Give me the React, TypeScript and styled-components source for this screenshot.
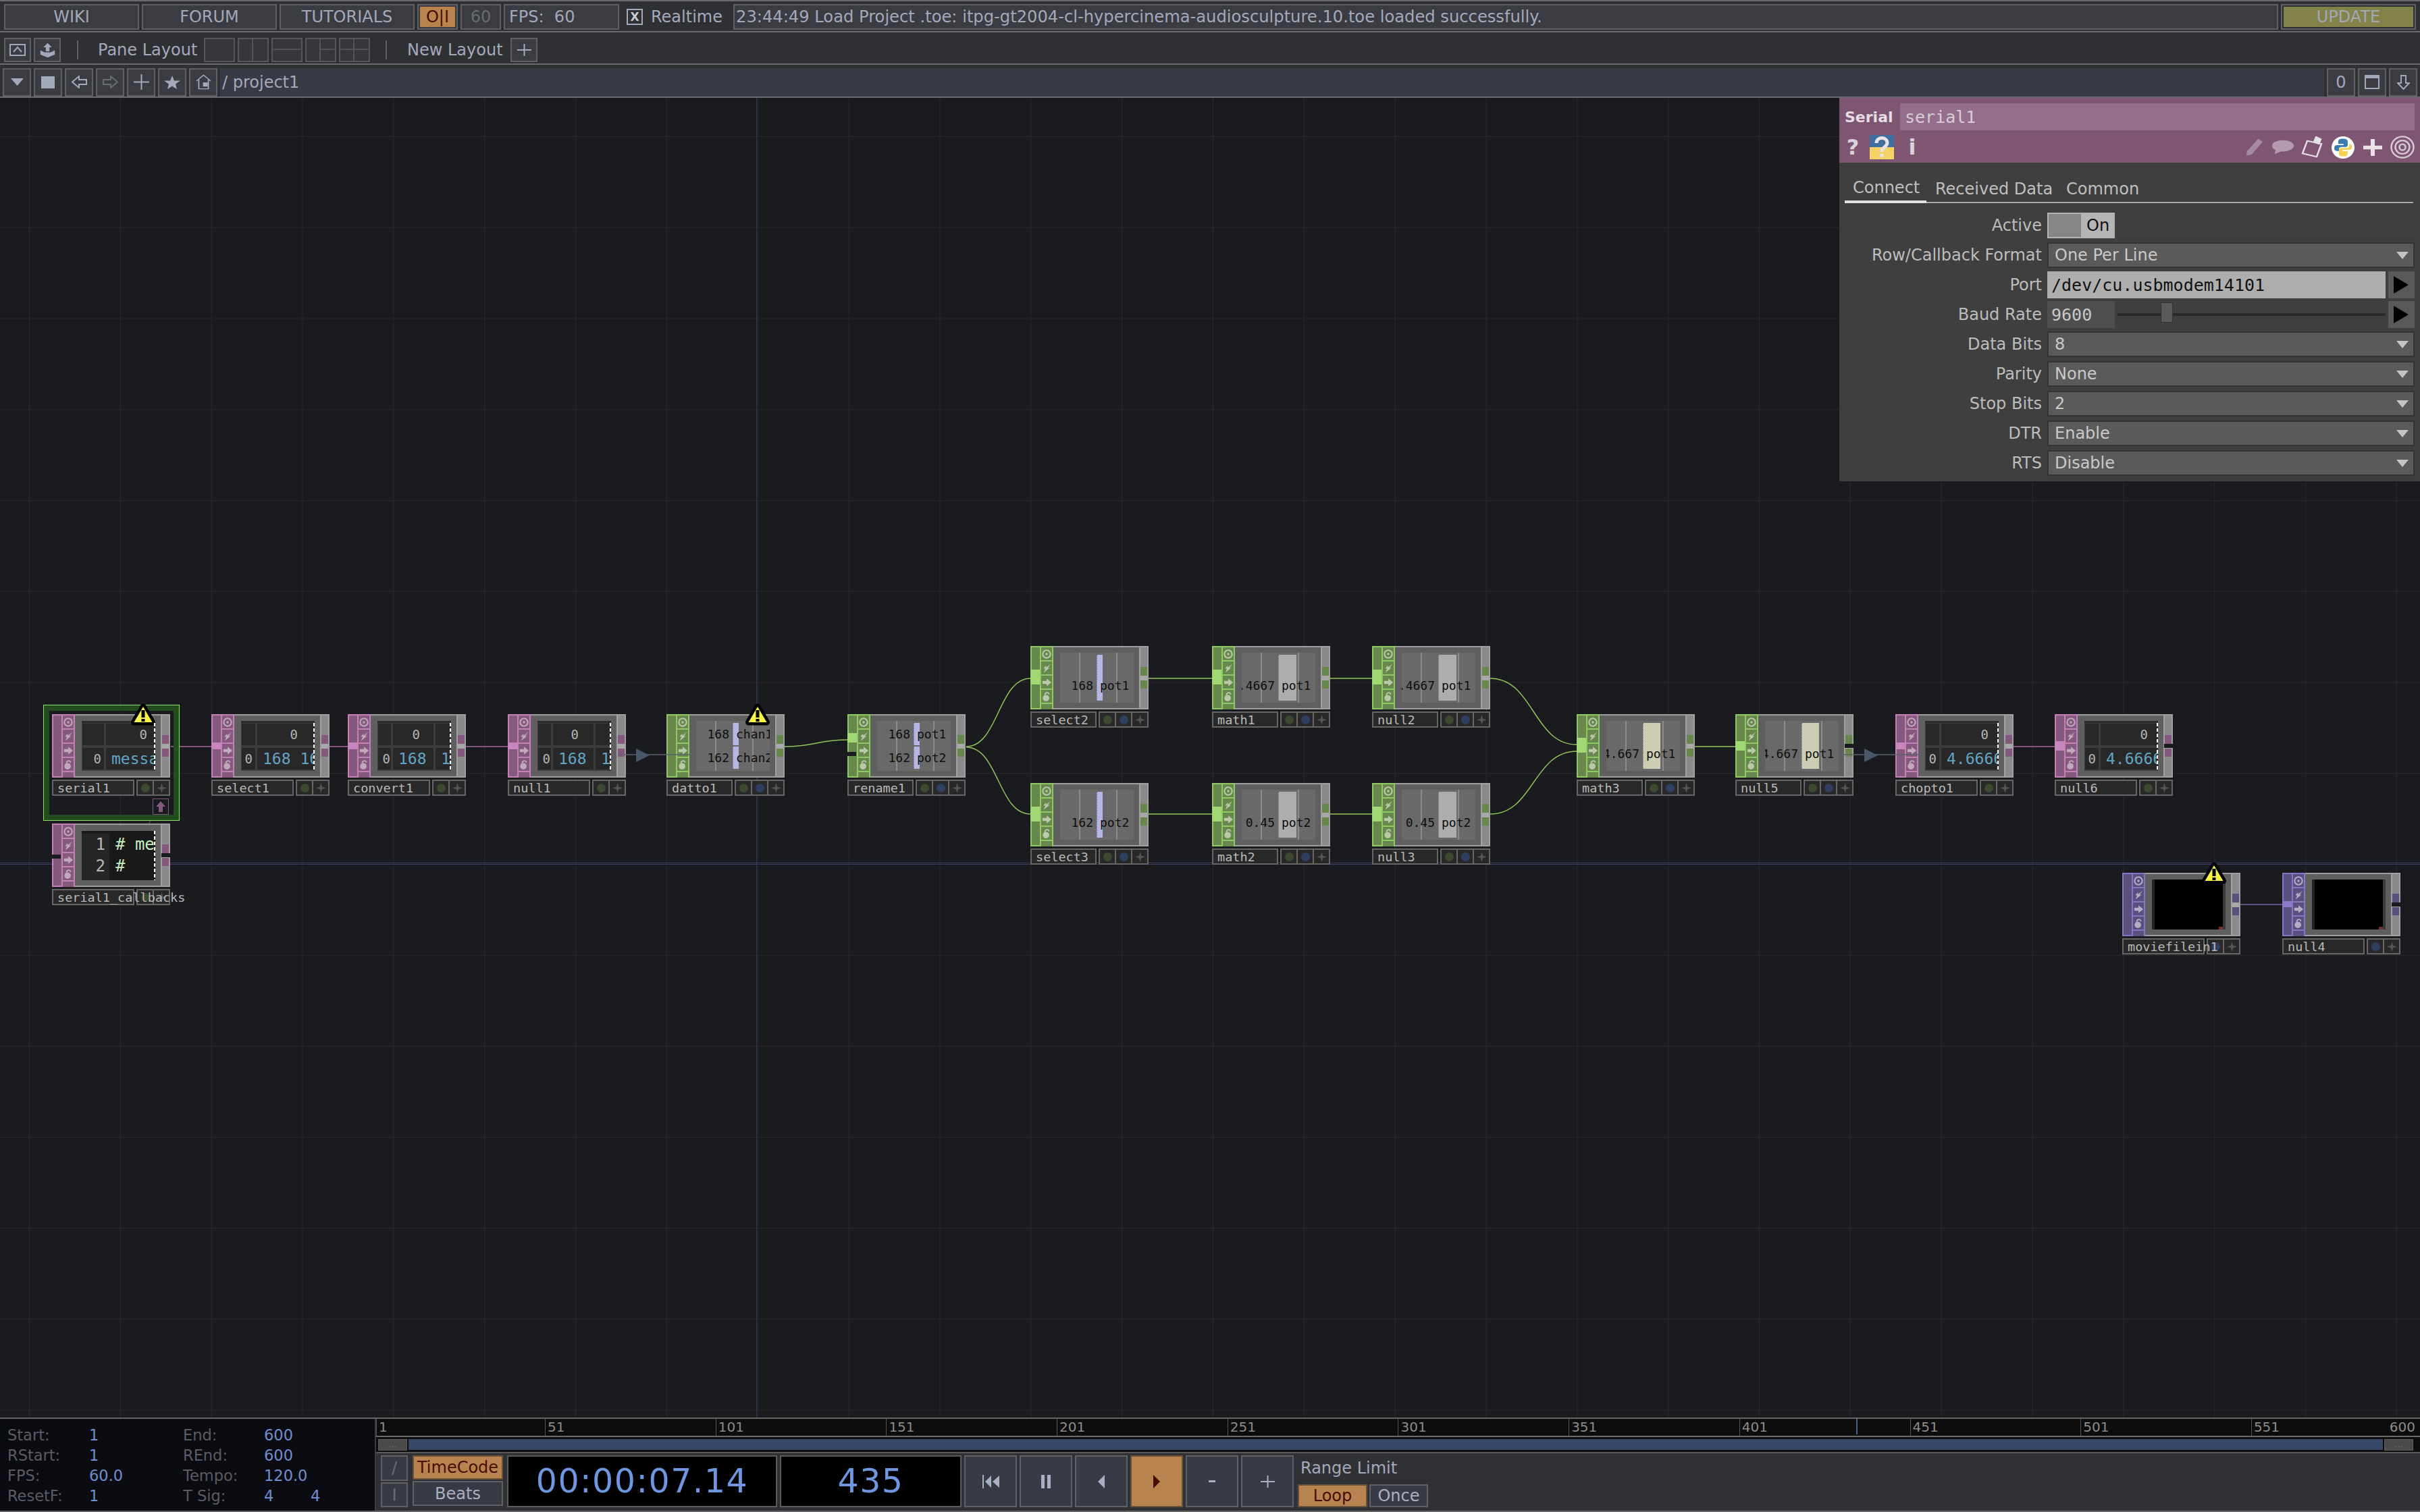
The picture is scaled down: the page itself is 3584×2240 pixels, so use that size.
import * as React from 'react'
import styled, { createGlobalStyle } from 'styled-components'

const CANVAS_TOP = 146
const SANS = '"DejaVu Sans", Verdana, sans-serif'
const MONO = '"DejaVu Sans Mono", "Liberation Mono", monospace'

const GlobalStyle = createGlobalStyle`
  html, body { margin: 0; padding: 0; background: #1a1b1f; }
  * { box-sizing: border-box; }
`

const Frame = styled.div`
  width: 3584px;
  height: 2240px;
  display: flex;
  flex-direction: column;
  overflow: hidden;
  background: #2f3033;
  font-family: ${SANS};
  font-size: 24px;
  color: #a3a9bb;
`

/* ---------- top bars ---------- */
const BarRow = styled.div<{ $h: number; $pt: number; $pl: number; $pr: number; $top?: boolean }>`
  height: ${p => p.$h}px;
  flex: none;
  display: flex;
  align-items: center;
  gap: 4px;
  padding: ${p => p.$pt}px ${p => p.$pr}px 0 ${p => p.$pl}px;
  border-bottom: 2px solid #6a6b6e;
  ${p => (p.$top ? 'border-top: 2px solid #6a6b6e;' : '')}
`
const BarButton = styled.div<{ $w: number; $h?: number; $dim?: boolean }>`
  width: ${p => p.$w}px;
  height: ${p => p.$h ?? 38}px;
  flex: none;
  display: flex;
  align-items: center;
  justify-content: center;
  background: #3a3c41;
  border: 2px solid #5f6063;
  color: ${p => (p.$dim ? '#696b72' : '#a3a9bb')};
`
const OrangeInner = styled.div`
  width: 52px;
  height: 30px;
  background: #b9834f;
  color: #4a0c00;
  display: flex;
  align-items: center;
  justify-content: center;
`
const FpsText = styled.span`
  width: 100%;
  padding-left: 6px;
  white-space: pre;
`
const CheckBox = styled.div`
  width: 24px;
  height: 24px;
  margin-left: 7px;
  flex: none;
  border: 2px solid #a3a9bb;
  font-size: 17px;
  font-weight: bold;
  color: #c8cbd6;
  display: flex;
  align-items: center;
  justify-content: center;
`
const Realtime = styled.span`
  margin: 0 0 0 8px;
  width: 118px;
  flex: none;
`
const LogField = styled.div`
  flex: 1;
  height: 38px;
  padding-left: 2px;
  display: flex;
  align-items: center;
  background: #3a3c41;
  border: 2px solid #5f6063;
  font-size: 24.2px;
  white-space: nowrap;
  overflow: hidden;
`
const UpdateOuter = styled.div`
  width: 200px;
  height: 38px;
  flex: none;
  padding: 2px;
  border: 2px solid #5f6063;
  display: flex;
`
const UpdateInner = styled.div`
  flex: 1;
  background: #838249;
  color: #a2a7ba;
  display: flex;
  align-items: center;
  justify-content: center;
`
const Divider = styled.div<{ $ml: number; $mr: number }>`
  width: 2px;
  height: 28px;
  margin: 0 ${p => p.$mr}px 0 ${p => p.$ml}px;
  background: #5f6063;
  flex: none;
`
const BarLabel = styled.span<{ $w: number }>`
  width: ${p => p.$w}px;
  flex: none;
  white-space: nowrap;
`
const PaneIcon = styled.svg`
  width: 46px;
  height: 36px;
  flex: none;
  border: 2px solid #56575b;
  background: #36373b;
`
const PathField = styled.div`
  flex: 1;
  height: 42px;
  display: flex;
  align-items: center;
  padding-left: 3px;
  background: #383b43;
`

/* ---------- canvas ---------- */
const Canvas = styled.div`
  position: relative;
  flex: 1;
  min-height: 0;
  overflow: hidden;
  background-color: #1a1b1f;
  background-image: linear-gradient(to right, #292a30 1px, transparent 1px),
    linear-gradient(to bottom, #292a30 1px, transparent 1px);
  background-position: 43px 0, 0 57px;
  background-size: 134.85px 100%, 100% 134.75px;
`
const OriginV = styled.div`
  position: absolute;
  top: 0;
  bottom: 0;
  left: 1120px;
  width: 1px;
  background: #35365c;
`
const OriginH = styled.div`
  position: absolute;
  left: 0;
  right: 0;
  top: 1133px;
  height: 3px;
  border-top: 1px solid #3a3a64;
  border-bottom: 1px solid #3a3a64;
`
const WireLayer = styled.svg`
  position: absolute;
  left: 0;
  top: 0;
  width: 3584px;
  height: 1954px;
  pointer-events: none;
`

type Family = 'chop' | 'dat' | 'top'
const FAMILY: Record<Family, { edge: string; dark: string; conn: string; glyph: string }> = {
  chop: { edge: '#8fc964', dark: '#67874c', conn: '#a3d974', glyph: '#b9c9a9' },
  dat: { edge: '#c381b8', dark: '#85597e', conn: '#c985bd', glyph: '#c0a9bc' },
  top: { edge: '#8577c4', dark: '#5a4f7f', conn: '#8c7cc8', glyph: '#b4aec4' },
}

const NodeBox = styled.div<{ $x: number; $y: number }>`
  position: absolute;
  left: ${p => p.$x}px;
  top: ${p => p.$y - CANVAS_TOP}px;
  width: 175px;
`
const NodeBody = styled.div`
  position: relative;
  height: 94px;
  display: flex;
  background: #5f5f5f;
  border-top: 2px solid #9e9e9e;
  border-bottom: 2px solid #9e9e9e;
`
const InputColumn = styled.div<{ $f: Family }>`
  position: relative;
  width: 14px;
  margin: -2px 0;
  flex: none;
  background: ${p => FAMILY[p.$f].dark};
  border: solid ${p => FAMILY[p.$f].edge};
  border-width: 2px 0 2px 2px;
`
const InputConnector = styled.div<{ $f: Family; $top: number; $h: number }>`
  position: absolute;
  left: -2px;
  right: 0;
  top: ${p => p.$top}px;
  height: ${p => p.$h}px;
  background: ${p => FAMILY[p.$f].conn};
`
const Notch = styled.div<{ $side: 'left' | 'right'; $top: number }>`
  position: absolute;
  ${p => p.$side}: -2px;
  top: ${p => p.$top}px;
  width: 13px;
  height: 6px;
  background: #1a1b1f;
  z-index: 2;
`
const FlagColumn = styled.div<{ $f: Family }>`
  width: 20px;
  margin: -2px 0;
  flex: none;
  display: flex;
  flex-direction: column;
  overflow: hidden;
  background: ${p => FAMILY[p.$f].edge};
  gap: 2px;
  padding: 0 2px;
`
const Flag = styled.div<{ $f: Family }>`
  height: 19px;
  flex: none;
  background: ${p => FAMILY[p.$f].dark};
  display: flex;
  align-items: center;
  justify-content: center;
  color: ${p => FAMILY[p.$f].glyph};
  &:first-child { margin-top: 2px; }
`
const NodeCenter = styled.div`
  flex: 1;
  min-width: 0;
  padding: 8px 8px 8px 10px;
  display: flex;
`
const OutputColumn = styled.div`
  position: relative;
  width: 14px;
  margin: -2px 0;
  flex: none;
  background: #8a8a8a;
  border: 2px solid #a0a0a0;
`
const OutputBand = styled.div`
  position: absolute;
  left: 0;
  right: 0;
  top: 40px;
  height: 11px;
  background: #a8a8a8;
`
const OutputSquare = styled.div<{ $f: Family; $top: number; $h: number }>`
  position: absolute;
  left: 0;
  width: 10px;
  top: ${p => p.$top}px;
  height: ${p => p.$h}px;
  background: ${p => FAMILY[p.$f].dark};
`

/* viewers */
const ChopViewer = styled.div`
  position: relative;
  flex: 1;
  background: #696969;
  overflow: hidden;
  padding: 3px 0;
  display: flex;
  flex-direction: column;
  gap: 2px;
`
const ScaleLine = styled.div<{ $left: number }>`
  position: absolute;
  top: 0;
  bottom: 0;
  left: ${p => p.$left}px;
  width: 2px;
  background: #8c8c8c;
`
const ChopRow = styled.div<{ $single: boolean }>`
  position: relative;
  flex: 1;
  display: flex;
  align-items: center;
  padding-top: ${p => (p.$single ? 22 : 0)}px;
  font-family: ${MONO};
  font-size: 18px;
  color: #0e0e0e;
`
const ChopBar = styled.div<{ $left: number; $w: number; $c: string }>`
  position: absolute;
  top: 0;
  bottom: 0;
  left: ${p => p.$left}px;
  width: ${p => p.$w}px;
  background: ${p => p.$c};
  border-left: 1px dotted #69697a;
`
const ChopValue = styled.span`
  position: relative;
  width: 49px;
  flex: none;
  white-space: nowrap;
  display: flex;
  justify-content: flex-end;
`
const ChopName = styled.span`
  position: relative;
  margin-left: 10px;
  white-space: nowrap;
`

const TableViewer = styled.div`
  position: relative;
  flex: 1;
  background: #3c3c3c;
  border-top: 3px solid #2c2c2c;
  overflow: hidden;
  padding: 1px 0 2px 1px;
  display: grid;
  grid-template-rows: 1fr 1fr;
  row-gap: 4px;
  font-family: ${MONO};
`
const TableRow = styled.div<{ $cols: string }>`
  display: grid;
  grid-template-columns: ${p => p.$cols};
  column-gap: 3px;
  min-height: 0;
`
const TableCell = styled.div<{ $right?: boolean; $blue?: boolean; $pr?: number }>`
  background: #282828;
  display: flex;
  align-items: center;
  overflow: hidden;
  white-space: pre;
  justify-content: ${p => (p.$right ? 'flex-end' : 'flex-start')};
  padding: ${p => (p.$right ? `0 ${p.$pr ?? 4}px 0 0` : '0 0 0 8px')};
  color: ${p => (p.$blue ? '#63a4c3' : '#b4b4b4')};
  font-size: ${p => (p.$blue ? 23 : 19)}px;
`
const DashEdge = styled.div`
  position: absolute;
  right: 0;
  top: 0;
  bottom: 0;
  width: 2px;
  z-index: 1;
  background: repeating-linear-gradient(to bottom, #fff 0 5px, transparent 5px 8px);
`
const CodeViewer = styled.div`
  position: relative;
  flex: 1;
  background: #191919;
  overflow: hidden;
  display: grid;
  grid-template-columns: 41px 1fr;
  grid-auto-rows: 32px;
  padding-top: 4px;
  font-family: ${MONO};
  font-size: 24px;
  line-height: 32px;
  margin-top: 1px;
`
const CodeNumber = styled.div`
  background: #262626;
  color: #b8b8b8;
  text-align: right;
  padding-right: 6px;
`
const CodeText = styled.div`
  color: #c5eec0;
  padding-left: 9px;
  white-space: pre;
`
const MovieViewer = styled.div`
  position: relative;
  flex: 1;
  background: #000;
  border-left: 4px solid #222;
  border-right: 4px solid #3a3a3a;
`
const RedMark = styled.div`
  position: absolute;
  right: 0;
  bottom: 0;
  width: 6px;
  height: 4px;
  background: #7a3030;
`

/* label */
const LabelRow = styled.div`
  display: flex;
  gap: 3px;
  height: 24px;
  margin-top: 3px;
  font-family: ${MONO};
  font-size: 18.5px;
  color: #b9b9b9;
`
const LabelName = styled.div`
  flex: 1;
  min-width: 0;
  padding-left: 6px;
  display: flex;
  align-items: center;
  white-space: nowrap;
  background: #282828;
  border: 2px solid #666;
  position: relative;
  z-index: 1;
`
const LabelCells = styled.div`
  display: flex;
  flex: none;
  background: #666;
  gap: 2px;
  border: 2px solid #666;
`
const LabelCell = styled.div`
  width: 22px;
  background: #282828;
  display: flex;
  align-items: center;
  justify-content: center;
`
const Dot = styled.div<{ $c: string }>`
  width: 13px;
  height: 13px;
  border-radius: 50%;
  background: ${p => p.$c};
`

/* overlays */
const SelectFrame = styled.div`
  position: absolute;
  left: 64px;
  top: ${1045 - CANVAS_TOP}px;
  width: 202px;
  height: 172px;
  border: 9px solid #244d1f;
  outline: 1px solid #8fe36c;
  outline-offset: -1px;
`
const DockBox = styled.div`
  position: absolute;
  left: 226px;
  top: ${1184 - CANVAS_TOP}px;
  width: 24px;
  height: 24px;
  border: 1px solid #85597e;
  background: #1a1b1f;
  display: flex;
  align-items: center;
  justify-content: center;
  color: #85597e;
`
const WarnMark = styled.svg<{ $x: number; $y: number }>`
  position: absolute;
  left: ${p => p.$x - 20}px;
  top: ${p => p.$y - CANVAS_TOP}px;
  width: 40px;
  height: 33px;
`
const FlowArrow = styled.svg<{ $x: number; $y: number }>`
  position: absolute;
  left: ${p => p.$x}px;
  top: ${p => p.$y - CANVAS_TOP}px;
  width: 20px;
  height: 20px;
`

/* ---------- parameter panel ---------- */
const Panel = styled.div`
  position: absolute;
  right: 0;
  top: 0;
  width: 860px;
  height: 568px;
  background: #3f3f3f;
  display: flex;
  flex-direction: column;
`
const PanelHeader = styled.div`
  height: 96px;
  background: #7e5672;
  padding: 8px 8px 0 8px;
`
const NameRow = styled.div`
  display: flex;
  align-items: center;
  height: 40px;
`
const OpType = styled.span`
  width: 82px;
  flex: none;
  font-weight: bold;
  font-size: 22px;
  color: #e6dde3;
`
const NameInput = styled.div`
  flex: 1;
  height: 40px;
  padding-left: 7px;
  display: flex;
  align-items: center;
  background: #946f8c;
  color: #d9cdd5;
  font-family: ${MONO};
  font-size: 25px;
`
const IconRow = styled.div`
  height: 38px;
  margin-top: 6px;
  display: flex;
  align-items: center;
`
const HelpGlyph = styled.span<{ $w: number; $ml?: number }>`
  width: ${p => p.$w}px;
  margin-left: ${p => p.$ml ?? 0}px;
  flex: none;
  font-weight: bold;
  font-size: 32px;
  color: #d9d2d7;
  text-align: center;
`
const IconSpacer = styled.div`
  flex: 1;
`
const HeaderIcon = styled.svg<{ $ml: number }>`
  margin-left: ${p => p.$ml}px;
  flex: none;
`
const Tabs = styled.div`
  margin: 18px 10px 0 8px;
  height: 42px;
  display: flex;
  border-bottom: 2px solid #a8a8a8;
  color: #bfbfbf;
`
const Tab = styled.div<{ $active?: boolean; $w: number }>`
  width: ${p => p.$w}px;
  height: 42px;
  padding-left: ${p => (p.$active ? 12 : 13)}px;
  display: flex;
  align-items: center;
  ${p => (p.$active ? 'border-bottom: 4px solid #e2e2e2;' : '')}
`
const ParamGrid = styled.div`
  margin-top: 11px;
  display: grid;
  grid-template-columns: 300px 1fr;
  grid-auto-rows: 44px;
  column-gap: 8px;
  padding-right: 8px;
  align-items: center;
`
const ParamLabel = styled.div`
  text-align: right;
  color: #bdbdbd;
  white-space: nowrap;
`
const Toggle = styled.div`
  width: 100px;
  height: 38px;
  display: flex;
  border: 2px solid #b4b4b4;
  background: #b4b4b4;
  color: #111;
`
const ToggleOff = styled.div`
  width: 48px;
  background: #868686;
`
const ToggleOn = styled.div`
  flex: 1;
  padding-left: 8px;
  display: flex;
  align-items: center;
`
const Menu = styled.div`
  height: 38px;
  display: flex;
  align-items: center;
  justify-content: space-between;
  padding: 0 7px 0 9px;
  background: #5a5a5a;
  border: 2px solid #333;
  color: #c9c9c9;
`
const MenuCaret = styled.div`
  width: 0;
  height: 0;
  border-left: 9px solid transparent;
  border-right: 9px solid transparent;
  border-top: 11px solid #c4c4c4;
`
const FieldRow = styled.div`
  height: 40px;
  display: flex;
  align-items: center;
  gap: 4px;
  font-family: ${MONO};
  font-size: 25px;
`
const TextField = styled.div`
  flex: 1;
  height: 40px;
  padding-left: 6px;
  display: flex;
  align-items: center;
  background: #aeaeae;
  color: #111;
`
const NumberField = styled.div`
  width: 100px;
  height: 40px;
  padding-left: 6px;
  display: flex;
  align-items: center;
  background: #4e4e4e;
  color: #c8c8c8;
`
const SliderTrack = styled.div`
  position: relative;
  flex: 1;
  height: 4px;
  background: #2a2a2a;
`
const SliderKnob = styled.div<{ $pos: number }>`
  position: absolute;
  left: ${p => p.$pos}px;
  top: -16px;
  width: 18px;
  height: 30px;
  background: #5a5a5a;
  border: 1px solid #333;
`
const RunButton = styled.div`
  width: 39px;
  height: 40px;
  flex: none;
  background: #595959;
  display: flex;
  align-items: center;
  justify-content: center;
`
const RunArrow = styled.div`
  width: 0;
  height: 0;
  margin-left: -2px;
  border-top: 13px solid transparent;
  border-bottom: 13px solid transparent;
  border-left: 22px solid #000;
`

/* ---------- timeline ---------- */
const Timeline = styled.div`
  height: 140px;
  flex: none;
  display: flex;
  border-top: 2px solid #666;
  border-bottom: 2px solid #666;
`
const Stats = styled.div`
  width: 557px;
  flex: none;
  background: #0b0b12;
  border-right: 2px solid #3c3c3c;
  padding: 9px 0 0 11px;
  display: grid;
  grid-template-columns: 121px 139px 120px 69px 1fr;
  grid-auto-rows: 30px;
  align-items: center;
  font-size: 22.5px;
  color: #5b5c63;
`
const StatValue = styled.span`
  color: #6f8fcf;
`
const TimelineMain = styled.div`
  flex: 1;
  min-width: 0;
  display: flex;
  flex-direction: column;
`
const Ruler = styled.div`
  position: relative;
  height: 27px;
  flex: none;
  display: flex;
  overflow: hidden;
  background: #0d0d0d;
  border-bottom: 2px solid #6a6a6a;
  color: #8b8b8b;
  font-size: 20px;
`
const Tick = styled.div<{ $w: number }>`
  width: ${p => p.$w}px;
  flex: none;
  padding-left: 3px;
  border-left: 1px solid #555;
  line-height: 25px;
`
const RulerEnd = styled.div`
  position: absolute;
  right: 7px;
  top: 0;
  line-height: 25px;
`
const Playhead = styled.div`
  position: absolute;
  left: 2192px;
  top: 0;
  width: 2px;
  height: 23px;
  background: #47608f;
`
const RangeRow = styled.div`
  height: 24px;
  flex: none;
  display: flex;
  align-items: center;
  gap: 2px;
  padding: 0 10px 0 3px;
  background: #0d0d0d;
  border-bottom: 2px solid #5a5a5a;
`
const RangeHandle = styled.div`
  width: 43px;
  height: 17px;
  flex: none;
  background: #4a4a4a;
  border: 1px solid #5e5e5e;
  color: #6a6a6a;
  font-size: 13px;
  line-height: 14px;
  text-align: center;
`
const RangeBar = styled.div`
  flex: 1;
  height: 16px;
  background: #374766;
`
const Controls = styled.div`
  flex: 1;
  display: flex;
  align-items: flex-start;
  gap: 4px;
  padding: 3px 0 0 7px;
  background: #303135;
`
const ControlStack = styled.div<{ $w: number; $ml?: number }>`
  width: ${p => p.$w}px;
  margin-left: ${p => p.$ml ?? 0}px;
  flex: none;
  display: flex;
  flex-direction: column;
  gap: 2px;
`
const ControlBtn = styled.div<{ $h: number; $w?: number; $on?: boolean; $dim?: boolean }>`
  height: ${p => p.$h}px;
  ${p => (p.$w ? `width: ${p.$w}px; flex: none;` : '')}
  display: flex;
  align-items: center;
  justify-content: center;
  background: ${p => (p.$on ? '#b9834f' : '#383b43')};
  border: 2px solid ${p => (p.$on ? '#6a5238' : '#606166')};
  color: ${p => (p.$on ? '#4a0c00' : p.$dim ? '#6a6d78' : '#a9afc3')};
`
const TimeDisplay = styled.div<{ $w: number; $ml?: number }>`
  width: ${p => p.$w}px;
  margin-left: ${p => p.$ml ?? 0}px;
  height: 77px;
  flex: none;
  display: flex;
  align-items: center;
  justify-content: center;
  background: #000;
  border: 2px solid #5c5c5c;
  color: #6f97e0;
  font-size: 49px;
  letter-spacing: 1.5px;
`
const RangeColumn = styled.div`
  margin-left: 2px;
  display: flex;
  flex-direction: column;
`
const RangeTitle = styled.div`
  height: 37px;
  padding-left: 4px;
  display: flex;
  align-items: center;
`
const LoopRow = styled.div`
  display: flex;
  gap: 3px;
  margin-top: 6px;
`

/* ---------- data ---------- */
type Chop = { value: string; name: string; left: number; w: number; c: string }
type Cell = { text: string; right?: boolean; blue?: boolean; pr?: number }
type Table = { cols: string; rows: Cell[][] }
type OpNode = {
  x: number
  y: number
  name: string
  f: Family
  chops?: Chop[]
  table?: Table
  code?: boolean
  movie?: boolean
  input?: [number, number]
  notchL?: number
  notchR?: boolean
}

const lilac = (value: string, name: string): Chop => ({ value, name, left: 54, w: 9, c: '#b6b6e5' })
const grey = (value: string, name: string): Chop => ({ value, name, left: 54, w: 27, c: '#adadad' })
const cream = (value: string, name: string): Chop => ({ value, name, left: 54, w: 26, c: '#cccdb3' })

const msgTable = (cols: string, value: string, pr: number): Table => ({
  cols,
  rows: [
    [{ text: '' }, { text: '0', right: true, pr }],
    [{ text: '0', right: true }, { text: value, blue: true }],
  ],
})

const twoCol = (pr: number): Table => ({
  cols: '19px 60px 1fr',
  rows: [
    [{ text: '' }, { text: '0', right: true, pr }, { text: '' }],
    [{ text: '0', right: true, pr: 1 }, { text: '168', blue: true }, { text: '168', blue: true }],
  ],
})

const NODES: OpNode[] = [
  { x: 77, y: 1059, name: 'serial1', f: 'dat', table: msgTable('32px 1fr', 'message', 12) },
  { x: 313, y: 1059, name: 'select1', f: 'dat', input: [40, 10], table: msgTable('20px 1fr', '168 168', 25) },
  { x: 515, y: 1059, name: 'convert1', f: 'dat', input: [40, 10], table: twoCol(20) },
  { x: 752, y: 1059, name: 'null1', f: 'dat', input: [40, 10], table: twoCol(22) },
  { x: 987, y: 1059, name: 'datto1', f: 'chop', chops: [lilac('168', 'chan1'), lilac('162', 'chan2')] },
  { x: 1255, y: 1059, name: 'rename1', f: 'chop', input: [26, 14], notchL: 54, chops: [lilac('168', 'pot1'), lilac('162', 'pot2')] },
  { x: 1526, y: 958, name: 'select2', f: 'chop', input: [33, 22], chops: [lilac('168', 'pot1')] },
  { x: 1526, y: 1161, name: 'select3', f: 'chop', input: [33, 22], chops: [lilac('162', 'pot2')] },
  { x: 1795, y: 958, name: 'math1', f: 'chop', input: [33, 22], chops: [grey('0.4667', 'pot1')] },
  { x: 1795, y: 1161, name: 'math2', f: 'chop', input: [33, 22], chops: [grey('0.45', 'pot2')] },
  { x: 2032, y: 958, name: 'null2', f: 'chop', input: [33, 22], chops: [grey('0.4667', 'pot1')] },
  { x: 2032, y: 1161, name: 'null3', f: 'chop', input: [33, 22], chops: [grey('0.45', 'pot2')] },
  { x: 2335, y: 1059, name: 'math3', f: 'chop', input: [33, 22], chops: [cream('4.667', 'pot1')] },
  { x: 2570, y: 1059, name: 'null5', f: 'chop', input: [38, 14], notchR: true, chops: [cream('4.667', 'pot1')] },
  { x: 2807, y: 1059, name: 'chopto1', f: 'dat', input: [40, 10], table: msgTable('20px 1fr', '4.66667', 15) },
  { x: 3043, y: 1059, name: 'null6', f: 'dat', input: [38, 14], notchR: true, table: msgTable('20px 1fr', '4.66667', 15) },
  { x: 77, y: 1221, name: 'serial1_callbacks', f: 'dat', code: true, notchL: 44, notchR: true },
  { x: 3143, y: 1294, name: 'moviefilein1', f: 'top', movie: true },
  { x: 3380, y: 1294, name: 'null4', f: 'top', movie: true, input: [40, 9], notchR: true },
]

const curve = (x1: number, y1: number, x2: number, y2: number) => {
  const top = CANVAS_TOP
  const mid = (x1 + x2) / 2
  return `M${x1} ${y1 - top} C${mid} ${y1 - top} ${mid} ${y2 - top} ${x2} ${y2 - top}`
}

const WIRES: { d: string; c: string }[] = [
  { d: curve(253, 1107, 313, 1107), c: '#a56a98' },
  { d: curve(488, 1107, 515, 1107), c: '#a56a98' },
  { d: curve(690, 1107, 752, 1107), c: '#a56a98' },
  { d: curve(1162, 1107, 1256, 1097), c: '#8fc457' },
  { d: curve(1431, 1107, 1526, 1006), c: '#8fc457' },
  { d: curve(1431, 1108, 1526, 1207), c: '#8fc457' },
  { d: curve(1701, 1006, 1795, 1006), c: '#8fc457' },
  { d: curve(1701, 1207, 1795, 1207), c: '#8fc457' },
  { d: curve(1970, 1006, 2032, 1006), c: '#8fc457' },
  { d: curve(1970, 1207, 2032, 1207), c: '#8fc457' },
  { d: curve(2207, 1006, 2335, 1104), c: '#8fc457' },
  { d: curve(2207, 1207, 2335, 1114), c: '#8fc457' },
  { d: curve(2510, 1107, 2570, 1107), c: '#8fc457' },
  { d: curve(2981, 1107, 3043, 1107), c: '#a56a98' },
  { d: curve(3318, 1341, 3380, 1341), c: '#7367b0' },
  { d: curve(236, 1204, 208, 1232), c: '#3e4a3e' },
]

/* these two run over the nodes they pass */
const LINK_WIRES = [curve(915, 1119, 1033, 1119), curve(2724, 1119, 2849, 1119)]

const TICKS = ['1', '51', '101', '151', '201', '251', '301', '351', '401', '451', '501', '551']

/* ---------- drawn icons ---------- */
const FlagTarget = () => (
  <svg width="14" height="14" viewBox="0 0 16 16" fill="none" stroke="currentColor">
    <circle cx="8" cy="8" r="6.5" strokeWidth="2.4" />
    <circle cx="8" cy="8" r="2" fill="currentColor" strokeWidth="0" />
  </svg>
)
const FlagBolt = () => (
  <svg width="15" height="16" viewBox="0 0 17 17" fill="currentColor">
    <path d="M15 1 L10 8 L13 8 L3 16 L6 9 L2.500 9 L7 4 L7.500 7 Z" />
  </svg>
)
const FlagArrow = () => (
  <svg width="15" height="14" viewBox="0 0 17 15" fill="currentColor">
    <path d="M1 5 H8 V1 L16 7.500 L8 14 V10 H1 Z" />
  </svg>
)
const FlagLock = () => (
  <svg width="14" height="16" viewBox="0 0 16 17" fill="currentColor">
    <circle cx="7" cy="11" r="5.500" />
    <path d="M5 6 C5 1 12 0 12 5" fill="none" stroke="currentColor" strokeWidth="2" />
  </svg>
)
const Star = () => (
  <svg width="15" height="15" viewBox="0 0 18 18" fill="#555">
    <path d="M9 0 L11 7 L18 9 L11 11 L9 18 L7 11 L0 9 L7 7 Z" />
  </svg>
)
const Warning = ({ x, y }: { x: number; y: number }) => (
  <WarnMark $x={x} $y={y} viewBox="0 0 40 33">
    <path d="M20 5 L33.500 28 H6.500 Z" fill="#000" stroke="#000" strokeWidth="9" strokeLinejoin="round" />
    <path d="M20 5 L33.500 28 H6.500 Z" fill="#f6f44a" />
    <rect x="17.500" y="10" width="5" height="11" fill="#000" />
    <rect x="17.500" y="23" width="5" height="4" fill="#000" />
  </WarnMark>
)
const Arrowhead = ({ x, y }: { x: number; y: number }) => (
  <FlowArrow $x={x} $y={y} viewBox="0 0 20 20">
    <path d="M0 0 L20 10 L0 20 Z" fill="#485869" />
  </FlowArrow>
)

const Stroke = { fill: 'none', stroke: '#a3a9bb', strokeWidth: 2 }

const Viewer = ({ node }: { node: OpNode }) => {
  if (node.chops) {
    const single = node.chops.length === 1
    return (
      <ChopViewer>
        <ScaleLine $left={28} />
        <ScaleLine $left={83} />
        {node.chops.map(c => (
          <ChopRow key={c.name} $single={single}>
            <ChopBar $left={c.left} $w={c.w} $c={c.c} />
            <ChopValue>{c.value}</ChopValue>
            <ChopName>{c.name}</ChopName>
          </ChopRow>
        ))}
      </ChopViewer>
    )
  }
  if (node.table) {
    const t = node.table
    return (
      <TableViewer>
        {t.rows.map((row, i) => (
          <TableRow key={i} $cols={t.cols}>
            {row.map((cell, j) => (
              <TableCell key={j} $right={cell.right} $blue={cell.blue} $pr={cell.pr}>
                {cell.text}
              </TableCell>
            ))}
          </TableRow>
        ))}
        <DashEdge />
      </TableViewer>
    )
  }
  if (node.code) {
    return (
      <CodeViewer>
        <CodeNumber>1</CodeNumber>
        <CodeText># me</CodeText>
        <CodeNumber>2</CodeNumber>
        <CodeText>#</CodeText>
        <CodeNumber>3</CodeNumber>
        <CodeText># d</CodeText>
        <DashEdge />
      </CodeViewer>
    )
  }
  return (
    <MovieViewer>
      <RedMark />
    </MovieViewer>
  )
}

const NodeView = ({ node }: { node: OpNode }) => (
  <NodeBox $x={node.x} $y={node.y}>
    <NodeBody>
      <InputColumn $f={node.f}>
        {node.input && <InputConnector $f={node.f} $top={node.input[0]} $h={node.input[1]} />}
        {node.notchL !== undefined && <Notch $side="left" $top={node.notchL} />}
      </InputColumn>
      <FlagColumn $f={node.f}>
        <Flag $f={node.f}><FlagTarget /></Flag>
        <Flag $f={node.f}><FlagBolt /></Flag>
        <Flag $f={node.f}><FlagArrow /></Flag>
        <Flag $f={node.f}><FlagLock /></Flag>
        <Flag $f={node.f} />
      </FlagColumn>
      <NodeCenter>
        <Viewer node={node} />
      </NodeCenter>
      <OutputColumn>
        <OutputBand />
        <OutputSquare $f={node.f} $top={29} $h={13} />
        <OutputSquare $f={node.f} $top={49} $h={12} />
        {node.notchR && <Notch $side="right" $top={42} />}
      </OutputColumn>
    </NodeBody>
    <LabelRow>
      <LabelName>{node.name}</LabelName>
      <LabelCells>
        {node.f !== 'top' && <LabelCell><Dot $c="#3c4a30" /></LabelCell>}
        {node.f !== 'dat' && <LabelCell><Dot $c="#2f3f62" /></LabelCell>}
        <LabelCell><Star /></LabelCell>
      </LabelCells>
    </LabelRow>
  </NodeBox>
)

const PANES = [
  [],
  ['M22 0 V36'],
  ['M0 17 H46'],
  ['M22 0 V36', 'M22 17 H46'],
  ['M22 0 V36', 'M0 17 H46'],
]

const MENUS: [string, string][] = [
  ['Data Bits', '8'],
  ['Parity', 'None'],
  ['Stop Bits', '2'],
  ['DTR', 'Enable'],
  ['RTS', 'Disable'],
]

const STATS: [string, string, string, string, string?][] = [
  ['Start:', '1', 'End:', '600'],
  ['RStart:', '1', 'REnd:', '600'],
  ['FPS:', '60.0', 'Tempo:', '120.0'],
  ['ResetF:', '1', 'T Sig:', '4', '4'],
]

const App: React.FC = () => (
  <Frame>
    <GlobalStyle />
    <BarRow $h={48} $pt={2} $pl={6} $pr={6} $top>
      <BarButton $w={200}>WIKI</BarButton>
      <BarButton $w={200}>FORUM</BarButton>
      <BarButton $w={200}>TUTORIALS</BarButton>
      <BarButton $w={60}><OrangeInner>O|I</OrangeInner></BarButton>
      <BarButton $w={60} $dim>60</BarButton>
      <BarButton $w={171}><FpsText>FPS:  60</FpsText></BarButton>
      <CheckBox>X</CheckBox>
      <Realtime>Realtime</Realtime>
      <LogField>23:44:49 Load Project .toe: itpg-gt2004-cl-hypercinema-audiosculpture.10.toe loaded successfully.</LogField>
      <UpdateOuter><UpdateInner>UPDATE</UpdateInner></UpdateOuter>
    </BarRow>
    <BarRow $h={48} $pt={6} $pl={6} $pr={6}>
      <BarButton $w={40} $h={36}>
        <svg width="24" height="18" viewBox="0 0 24 18" {...Stroke}>
          <rect x="1" y="1" width="22" height="16" />
          <path d="M6 12 L12 5 L18 12" />
        </svg>
      </BarButton>
      <BarButton $w={40} $h={36}>
        <svg width="25" height="23" viewBox="0 0 28 30" preserveAspectRatio="none" fill="#a3a9bb">
          <path d="M14 1 L21 9 H17 V17 H11 V9 H7 Z" />
          <path d="M2 15 L9 19 H19 L26 15 V23 L14 29 L2 23 Z" />
        </svg>
      </BarButton>
      <Divider $ml={20} $mr={25} />
      <BarLabel $w={153}>Pane Layout</BarLabel>
      {PANES.map((lines, i) => (
        <PaneIcon key={i} viewBox="0 0 46 36">
          {lines.map(d => <path key={d} d={d} stroke="#56575b" strokeWidth="2" />)}
        </PaneIcon>
      ))}
      <Divider $ml={19} $mr={26} />
      <BarLabel $w={149}>New Layout</BarLabel>
      <BarButton $w={40} $h={36}>
        <svg width="21" height="18" viewBox="0 0 21 18" {...Stroke}><path d="M10.500 0 V18 M0 9 H21" /></svg>
      </BarButton>
    </BarRow>
    <BarRow $h={49} $pt={4} $pl={4} $pr={4}>
      <BarButton $w={42} $h={42}>
        <svg width="19" height="11" viewBox="0 0 19 11" fill="#a3a9bb"><path d="M0 0 H19 L9.500 11 Z" /></svg>
      </BarButton>
      <BarButton $w={42} $h={42}>
        <svg width="20" height="18" viewBox="0 0 20 18" fill="#a3a9bb"><rect width="20" height="18" /></svg>
      </BarButton>
      <BarButton $w={42} $h={42}>
        <svg width="23" height="19" viewBox="0 0 23 19" {...Stroke}><path d="M11 1 L1 9.500 L11 18 V13 H22 V6 H11 Z" /></svg>
      </BarButton>
      <BarButton $w={42} $h={42}>
        <svg width="23" height="19" viewBox="0 0 23 19" {...Stroke} stroke="#696b72"><path d="M12 1 L22 9.500 L12 18 V13 H1 V6 H12 Z" /></svg>
      </BarButton>
      <BarButton $w={42} $h={42}>
        <svg width="23" height="23" viewBox="0 0 23 23" {...Stroke}><path d="M11.500 0 V23 M0 11.500 H23" /></svg>
      </BarButton>
      <BarButton $w={42} $h={42}>
        <svg width="24" height="20" viewBox="0 0 24 24" preserveAspectRatio="none" fill="#a3a9bb"><path d="M12 0 L15 9 H24 L17 15 L19 24 L12 19 L5 24 L7 15 L0 9 H9 Z" /></svg>
      </BarButton>
      <BarButton $w={42} $h={42}>
        <svg width="23" height="23" viewBox="0 0 26 34" preserveAspectRatio="none" {...Stroke}>
          <path d="M1 15 L13 2 L25 15 M5 12 V32 H21 V12" />
          <rect x="13" y="19" width="6" height="7" fill="#a3a9bb" />
        </svg>
      </BarButton>
      <PathField>/ project1</PathField>
      <BarButton $w={42} $h={42}>0</BarButton>
      <BarButton $w={42} $h={42}>
        <svg width="22" height="21" viewBox="0 0 22 21" fill="none" stroke="#a3a9bb" strokeWidth="2">
          <rect x="1" y="1" width="20" height="19" />
          <path d="M1 3 H21" strokeWidth="4" />
        </svg>
      </BarButton>
      <BarButton $w={42} $h={42}>
        <svg width="19" height="22" viewBox="0 0 19 22" {...Stroke}><path d="M6 1 H13 V12 H18 L9.500 21 L1 12 H6 Z" /></svg>
      </BarButton>
    </BarRow>

    <Canvas>
      <OriginV />
      <OriginH />
      <WireLayer viewBox="0 0 3584 1954">
        {WIRES.map(w => <path key={w.d} d={w.d} fill="none" stroke={w.c} strokeWidth="1.500" />)}
      </WireLayer>
      <SelectFrame />
      {NODES.map(n => <NodeView key={n.name} node={n} />)}
      <WireLayer viewBox="0 0 3584 1954">
        {LINK_WIRES.map(d => <path key={d} d={d} fill="none" stroke="#586370" strokeWidth="1.500" />)}
      </WireLayer>
      <DockBox>
        <svg width="14" height="16" viewBox="0 0 14 16" fill="currentColor"><path d="M7 0 L14 8 H10 V16 H4 V8 H0 Z" /></svg>
      </DockBox>
      <Arrowhead x={942} y={1110} />
      <Arrowhead x={2761} y={1110} />
      <Warning x={212} y={1043} />
      <Warning x={1122} y={1043} />
      <Warning x={3279} y={1278} />

      <Panel>
        <PanelHeader>
          <NameRow>
            <OpType>Serial</OpType>
            <NameInput>serial1</NameInput>
          </NameRow>
          <IconRow>
            <HelpGlyph $w={24}>?</HelpGlyph>
            <HeaderIcon $ml={13} width="36" height="36" viewBox="0 0 36 36">
              <rect width="36" height="18" fill="#3f6f9f" />
              <rect y="18" width="36" height="18" fill="#f6d266" />
              <path d="M10 12 C10 2 26 2 26 12 C26 18 18 17 18 25 M18 28 V33" fill="none" stroke="#e8e2e6" strokeWidth="5" />
            </HeaderIcon>
            <HelpGlyph $w={20} $ml={17}>i</HelpGlyph>
            <IconSpacer />
            <HeaderIcon $ml={0} width="27" height="28" viewBox="0 0 28 38" preserveAspectRatio="none" fill="#a48b9f">
              <path d="M20 2 L27 8 L10 34 L2 36 L3 27 Z" />
            </HeaderIcon>
            <HeaderIcon $ml={11} width="34" height="22" viewBox="0 0 36 34" preserveAspectRatio="none" fill="#b49cae">
              <ellipse cx="19" cy="14" rx="17" ry="13" />
              <path d="M8 22 L6 33 L18 26 Z" />
            </HeaderIcon>
            <HeaderIcon $ml={10} width="36" height="32" viewBox="0 0 36 38" preserveAspectRatio="none" fill="none" stroke="#e6e0e4" strokeWidth="2.500">
              <path d="M10 8 L31 13 L24 36 L3 30 Z" />
              <path d="M20 10 L23 1 L30 5 L27 13 Z" fill="#e6e0e4" />
            </HeaderIcon>
            <HeaderIcon $ml={10} width="34" height="33" viewBox="0 0 34 38" preserveAspectRatio="none">
              <ellipse cx="17" cy="19" rx="17" ry="19" fill="#fff" />
              <path d="M17 4 C11 4 10 6 10 9 V13 H18 V15 H8 C5 15 4 17 4 20 C4 23 5 25 8 25 H11 V21 C11 19 13 18 15 18 H21 C23 18 24 16 24 15 V9 C24 6 22 4 17 4 Z" fill="#3c7ab0" />
              <path d="M17 34 C23 34 24 32 24 29 V25 H16 V23 H26 C29 23 30 21 30 18 C30 15 29 13 26 13 H26 V17 C26 19 24 20 22 20 H14 C12 20 11 22 11 23 V29 C11 32 12 34 17 34 Z" fill="#f6d155" />
            </HeaderIcon>
            <HeaderIcon $ml={13} width="28" height="25" viewBox="0 0 28 28" preserveAspectRatio="none" fill="#e9e3e7">
              <path d="M11 0 H17 V11 H28 V17 H17 V28 H11 V17 H0 V11 H11 Z" />
            </HeaderIcon>
            <HeaderIcon $ml={12} width="36" height="34" viewBox="0 0 36 38" preserveAspectRatio="none" fill="none" stroke="#d5cbd2" strokeWidth="2.500">
              <ellipse cx="18" cy="19" rx="16.500" ry="17.500" />
              <ellipse cx="18" cy="19" rx="10.500" ry="11" />
              <ellipse cx="18" cy="19" rx="4.500" ry="5" />
            </HeaderIcon>
          </IconRow>
        </PanelHeader>
        <Tabs>
          <Tab $active $w={121}>Connect</Tab>
          <Tab $w={194}>Received Data</Tab>
          <Tab $w={160}>Common</Tab>
        </Tabs>
        <ParamGrid>
          <ParamLabel>Active</ParamLabel>
          <Toggle><ToggleOff /><ToggleOn>On</ToggleOn></Toggle>
          <ParamLabel>Row/Callback Format</ParamLabel>
          <Menu>One Per Line<MenuCaret /></Menu>
          <ParamLabel>Port</ParamLabel>
          <FieldRow>
            <TextField>/dev/cu.usbmodem14101</TextField>
            <RunButton><RunArrow /></RunButton>
          </FieldRow>
          <ParamLabel>Baud Rate</ParamLabel>
          <FieldRow>
            <NumberField>9600</NumberField>
            <SliderTrack><SliderKnob $pos={64} /></SliderTrack>
            <RunButton><RunArrow /></RunButton>
          </FieldRow>
          {MENUS.map(([label, value]) => (
            <React.Fragment key={label}>
              <ParamLabel>{label}</ParamLabel>
              <Menu>{value}<MenuCaret /></Menu>
            </React.Fragment>
          ))}
        </ParamGrid>
      </Panel>
    </Canvas>

    <Timeline>
      <Stats>
        {STATS.map(([a, b, c, d, e]) => (
          <React.Fragment key={a}>
            <span>{a}</span>
            <StatValue>{b}</StatValue>
            <span>{c}</span>
            <StatValue>{d}</StatValue>
            {e ? <StatValue>{e}</StatValue> : <span />}
          </React.Fragment>
        ))}
      </Stats>
      <TimelineMain>
        <Ruler>
          {TICKS.map((t, i) => <Tick key={t} $w={i === 0 ? 250 : 252.7}>{t}</Tick>)}
          <RulerEnd>600</RulerEnd>
          <Playhead />
        </Ruler>
        <RangeRow>
          <RangeHandle>...</RangeHandle>
          <RangeBar />
          <RangeHandle>...</RangeHandle>
        </RangeRow>
        <Controls>
          <ControlStack $w={40}>
            <ControlBtn $h={38} $dim>/</ControlBtn>
            <ControlBtn $h={37} $dim>I</ControlBtn>
          </ControlStack>
          <ControlStack $w={134} $ml={3}>
            <ControlBtn $h={36} $on>TimeCode</ControlBtn>
            <ControlBtn $h={37}>Beats</ControlBtn>
          </ControlStack>
          <TimeDisplay $w={400} $ml={2}>00:00:07.14</TimeDisplay>
          <TimeDisplay $w={269}>435</TimeDisplay>
          <ControlBtn $h={77} $w={78}>
            <svg width="25" height="20" viewBox="0 0 25 20" fill="#a9afc3">
              <path d="M0 0 H2 V20 H0 Z M13 1 V19 L4 10 Z M25 1 V19 L15 10 Z" />
            </svg>
          </ControlBtn>
          <ControlBtn $h={77} $w={78}>
            <svg width="14" height="20" viewBox="0 0 14 20" fill="#a9afc3"><path d="M0 0 H5 V20 H0 Z M9 0 H14 V20 H9 Z" /></svg>
          </ControlBtn>
          <ControlBtn $h={77} $w={78}>
            <svg width="10" height="20" viewBox="0 0 10 20" fill="#a9afc3"><path d="M10 0 V20 L0 10 Z" /></svg>
          </ControlBtn>
          <ControlBtn $h={77} $w={78} $on>
            <svg width="10" height="20" viewBox="0 0 10 20" fill="#4a0c00"><path d="M0 0 V20 L10 10 Z" /></svg>
          </ControlBtn>
          <ControlBtn $h={77} $w={78}>
            <svg width="10" height="3" viewBox="0 0 10 3" fill="#a9afc3"><rect width="10" height="3" /></svg>
          </ControlBtn>
          <ControlBtn $h={77} $w={78}>
            <svg width="21" height="18" viewBox="0 0 21 18" fill="none" stroke="#a9afc3" strokeWidth="2"><path d="M10.500 0 V18 M0 9 H21" /></svg>
          </ControlBtn>
          <RangeColumn>
            <RangeTitle>Range Limit</RangeTitle>
            <LoopRow>
              <ControlBtn $h={34} $w={103} $on>Loop</ControlBtn>
              <ControlBtn $h={34} $w={87}>Once</ControlBtn>
            </LoopRow>
          </RangeColumn>
        </Controls>
      </TimelineMain>
    </Timeline>
  </Frame>
)

export default App
